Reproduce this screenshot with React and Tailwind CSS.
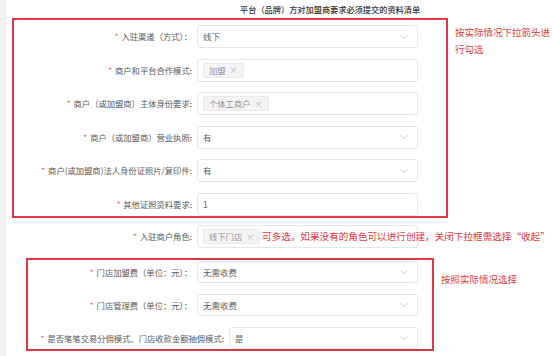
import React from "react";

const RED = "#dc3a40";

function Chevron() {
  return (
    <svg width="8" height="5" viewBox="0 0 8 5" className="absolute right-[9px] top-1/2 -translate-y-1/2">
      <polyline points="0.5,0.8 4,4 7.5,0.8" fill="none" stroke="#c0c4cc" strokeWidth="0.9" />
    </svg>
  );
}

function Tag({ children }) {
  return (
    <span className="inline-flex items-center h-[15px] px-[5px] bg-[#f4f4f5] border border-[#e9e9eb] rounded-[2px] text-[8.3px] text-[#909399] leading-none whitespace-nowrap">
      {children}
      <span className="ml-[4px] text-[8px] text-[#b0b3b8]">×</span>
    </span>
  );
}

function Row({ label, labelW = "w-[178px]", inputW = "w-[221px]", h = "h-[23px]", value, tags, chevron = true, children }) {
  return (
    <div className="flex items-center">
      <div className={`${labelW} shrink-0 text-right whitespace-nowrap text-[8.3px] text-[#5a5a5a] leading-none`}>
        <span className="text-[#f56c6c] mr-[3px]">*</span>
        {label}
      </div>
      <div className={`${inputW} ${h} ml-[5px] shrink-0 relative border border-[#e4e7ed] rounded-[3px] bg-white flex items-center pl-[5px]`}>
        {value && <span className="text-[8.5px] text-[#606266] leading-none">{value}</span>}
        {tags}
        {chevron && <Chevron />}
        {children}
      </div>
    </div>
  );
}

export default function App() {
  return (
    <div className="w-[554px] h-[356px] bg-white flex overflow-hidden font-['Noto_Sans_CJK_SC','Noto_Sans',sans-serif]">
      <div className="w-[6px] shrink-0 bg-[#f2f2f3]" />
      <div className="flex-1 flex flex-col">
        <div className="pt-[3px] pl-[234px] h-[15px] text-[8.2px] leading-[12px] font-medium text-[#333] whitespace-nowrap">
          平台（品牌）方对加盟商要求必须提交的资料清单
        </div>
        <div className="mt-[3px] flex items-start">
          <div className="ml-[6px] w-[436px] h-[200px] border-2 border-[#dc3a40] pt-[5px] flex flex-col gap-[10.5px]">
            <Row label="入驻渠道（方式）：" value="线下" />
            <Row label="商户和平台合作模式:" chevron={false} tags={<Tag>加盟</Tag>} />
            <Row label="商户（或加盟商）主体身份要求:" chevron={false} tags={<Tag>个体工商户</Tag>} />
            <Row label="商户（或加盟商）营业执照:" value="有" />
            <Row label="商户(或加盟商)法人身份证照片/复印件:" value="有" />
            <Row label="其他证照资料要求:" value="1" chevron={false} />
          </div>
          <div className="ml-[7px] mt-[6px] text-[9.5px] leading-[17px] text-[#e23a3f] whitespace-nowrap">
            按实际情况下拉箭头进
            <br />
            行勾选
          </div>
        </div>
        <div className="mt-[7px] ml-[8px]">
          <Row label="入驻商户角色:" chevron={false} tags={<Tag>线下门店</Tag>}>
            <span className="absolute left-[64px] top-1/2 -translate-y-1/2 text-[9.6px] leading-none text-[#e23a3f] whitespace-nowrap bg-white">
              可多选，如果没有的角色可以进行创建，关闭下拉框需选择“收起”
            </span>
          </Row>
        </div>
        <div className="mt-[10px] flex items-start">
          <div className="ml-[20px] w-[408px] h-[93px] border-2 border-[#dc3a40] pt-[1px] flex flex-col gap-[11px]">
            <Row label="门店加盟费（单位：元）：" labelW="w-[164px]" h="h-[22px]" value="无需收费" />
            <Row label="门店管理费（单位：元）：" labelW="w-[164px]" h="h-[22px]" value="无需收费" />
            <Row label="是否笔笔交易分佣模式、门店收款金额抽佣模式:" labelW="w-[196px]" inputW="w-[189px]" h="h-[22px]" value="是" />
          </div>
          <div className="ml-[7px] mt-[14px] text-[9.5px] leading-[14px] text-[#e23a3f] whitespace-nowrap">
            按照实际情况选择
          </div>
        </div>
      </div>
    </div>
  );
}
